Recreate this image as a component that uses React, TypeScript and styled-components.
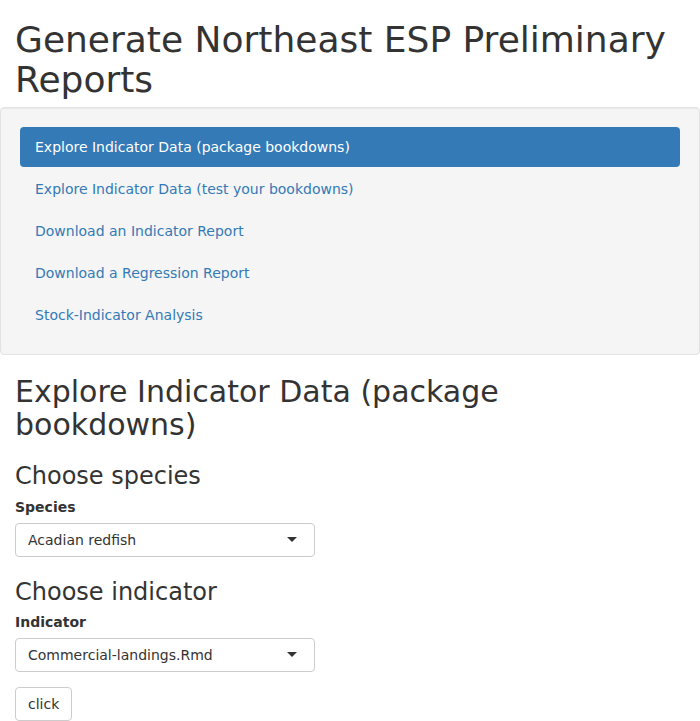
import React from "react";
import styled, { createGlobalStyle } from "styled-components";

const Global = createGlobalStyle`
  html, body { margin: 0; padding: 0; background: #fff; }
  body {
    font-family: "DejaVu Sans", "Liberation Sans", sans-serif;
    font-size: 14px;
    line-height: 1.42857143;
    color: #333;
  }
  * { box-sizing: border-box; }
`;

const Page = styled.div`
  display: flex;
  flex-direction: column;
`;

const Section = styled.div`
  padding: 0 15px;
`;

const Title = styled.h1`
  font-size: 36px;
  font-weight: 500;
  line-height: 1.1;
  margin: 20px 0 8px;
`;

const Well = styled.div`
  background: #f5f5f5;
  border: 1px solid #e3e3e3;
  border-radius: 4px;
  box-shadow: inset 0 1px 1px rgba(0, 0, 0, 0.05);
  padding: 19px;
  margin-bottom: 20px;
`;

const NavList = styled.ul`
  list-style: none;
  margin: 0;
  padding: 0;
  display: flex;
  flex-direction: column;
  gap: 2px;
`;

const NavLink = styled.a<{ $active?: boolean }>`
  display: block;
  padding: 10px 15px;
  line-height: 20px;
  border-radius: 4px;
  text-decoration: none;
  color: ${(p) => (p.$active ? "#fff" : "#337ab7")};
  background: ${(p) => (p.$active ? "#337ab7" : "transparent")};
`;

const H2 = styled.h2`
  font-size: 30px;
  font-weight: 500;
  line-height: 1.1;
  margin: 0 0 22px;
`;

const H3 = styled.h3<{ $gap?: number }>`
  font-size: 24px;
  font-weight: 500;
  line-height: 1.1;
  margin: ${(p) => p.$gap ?? 0}px 0 7px;
`;

const FormGroup = styled.div`
  display: flex;
  flex-direction: column;
  margin-bottom: 15px;
  width: 300px;
`;

const Label = styled.label`
  font-weight: 700;
  margin-bottom: 6px;
`;

const Select = styled.div`
  position: relative;
  height: 34px;
  border: 1px solid #ccc;
  border-radius: 4px;
  background: #fff;
  padding: 6px 12px;
  line-height: 20px;
  color: #333;
  &::after {
    content: "";
    position: absolute;
    right: 17px;
    top: 50%;
    margin-top: -3px;
    border-style: solid;
    border-width: 5px 5px 0 5px;
    border-color: #333 transparent transparent transparent;
  }
`;

const Button = styled.button`
  align-self: flex-start;
  font: inherit;
  line-height: 20px;
  color: #333;
  background: #fff;
  border: 1px solid #ccc;
  border-radius: 4px;
  padding: 6px 12px;
  cursor: pointer;
`;

const Content = styled(Section)`
  display: flex;
  flex-direction: column;
`;

const items = [
  "Explore Indicator Data (package bookdowns)",
  "Explore Indicator Data (test your bookdowns)",
  "Download an Indicator Report",
  "Download a Regression Report",
  "Stock-Indicator Analysis",
];

export default function App() {
  return (
    <Page>
      <Global />
      <Section>
        <Title>Generate Northeast ESP Preliminary Reports</Title>
      </Section>
      <Well>
        <NavList>
          {items.map((t, i) => (
            <li key={t}>
              <NavLink href="#" $active={i === 0}>
                {t}
              </NavLink>
            </li>
          ))}
        </NavList>
      </Well>
      <Content>
        <H2>Explore Indicator Data (package bookdowns)</H2>
        <H3>Choose species</H3>
        <FormGroup>
          <Label>Species</Label>
          <Select>Acadian redfish</Select>
        </FormGroup>
        <H3 $gap={7}>Choose indicator</H3>
        <FormGroup>
          <Label>Indicator</Label>
          <Select>Commercial-landings.Rmd</Select>
        </FormGroup>
        <Button>click</Button>
      </Content>
    </Page>
  );
}
